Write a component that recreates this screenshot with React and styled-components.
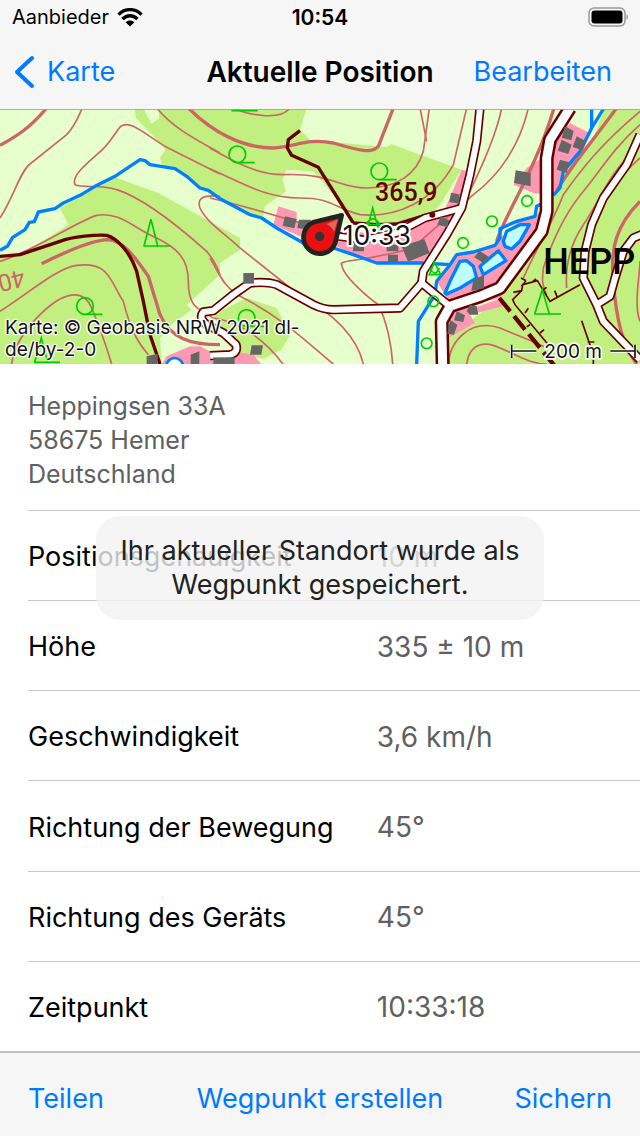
import React from "react";
import styled, { createGlobalStyle } from "styled-components";

const GlobalStyle = createGlobalStyle`
  *, *::before, *::after { box-sizing: border-box; }
  body { margin: 0; background: #fff; }
`;

const Screen = styled.div`
  display: flex;
  flex-direction: column;
  min-height: 100vh;
  font-family: Inter, "Liberation Sans", sans-serif;
  font-size: 27px;
  color: #000;
  background: #fff;
`;

const StatusBar = styled.div`
  display: grid;
  grid-template-columns: 1fr auto 1fr;
  align-items: center;
  height: 34px;
  padding: 0 12px;
  background: #f6f6f6;
  font-size: 20px;
`;

const Carrier = styled.div`
  display: flex;
  align-items: center;
  gap: 8px;
`;

const Clock = styled.time`
  font-size: 21px;
  font-weight: 600;
`;

const Battery = styled.svg`
  justify-self: end;
`;

const NavBar = styled.header`
  display: grid;
  grid-template-columns: 1fr auto 1fr;
  align-items: center;
  height: 75px;
  background: #f6f6f6;
`;

const Title = styled.h1`
  margin: 0;
  font-size: 28px;
  font-weight: 600;
`;

const TextButton = styled.button`
  display: flex;
  align-items: center;
  gap: 12px;
  justify-self: ${(p) => p.$side || "center"};
  padding: 0 ${(p) => p.$inset || "0"};
  border: 0;
  background: none;
  color: #007aff;
  font: inherit;
  white-space: nowrap;
  cursor: pointer;
`;

const MapView = styled.section`
  position: relative;
  height: 255px;
  overflow: hidden;
`;

const MapDrawing = styled.svg`
  display: block;
  width: 100%;
  height: 100%;
`;

const Attribution = styled.p`
  position: absolute;
  left: 5px;
  bottom: 3px;
  width: 310px;
  margin: 0;
  font-size: 19px;
  line-height: 22px;
  color: #111;
  text-shadow: 0 0 2px #fff, 1px 1px 1px #fff, -1px -1px 1px #fff, 1px -1px 1px #fff, -1px 1px 1px #fff;
`;

const Details = styled.main`
  position: relative;
  display: flex;
  flex: 1;
  flex-direction: column;
  padding-left: 28px;
`;

const Address = styled.address`
  padding: 25px 0 19px;
  font-size: 25px;
  font-style: normal;
  line-height: 34px;
  color: #606060;
`;

const Facts = styled.dl`
  display: grid;
  flex: 1;
  grid-auto-rows: minmax(90px, 1fr);
  margin: 0;
`;

const Fact = styled.div`
  display: grid;
  grid-template-columns: 57fr 43fr;
  align-items: center;
  padding-top: 2px;
  border-top: 1px solid #c8c8c8;
`;

const Name = styled.dt`
  white-space: nowrap;
`;

const Value = styled.dd`
  margin: 0;
  font-size: 28px;
  color: #606060;
`;

const Toast = styled.div`
  position: absolute;
  top: 152px;
  left: 15%;
  right: 15%;
  padding: 18px 0;
  border-radius: 24px;
  background: rgba(242, 242, 242, 0.8);
  color: #222;
  line-height: 34px;
  text-align: center;
`;

const ToolBar = styled.footer`
  display: grid;
  grid-template-columns: 1fr auto 1fr;
  align-items: center;
  height: 85px;
  padding: 8px 28px 0;
  border-top: 2px solid #c2c2c2;
  background: #f6f6f6;
`;

const FOREST = [
  "M403 0L408 30L470 95L497 125L480 150L490 180L530 185L600 240L650 265L750 320L788 330L794 295L858 250L848 215L858 185L940 190L1000 260L1065 345L1190 350L1290 325L1320 290L1385 185L1260 140L1175 108L1160 118L930 95L900 65L920 0H475L478 30L455 47L430 0Z",
  "M180 300L345 208L475 255L720 390L720 425L660 465L660 500L560 590L575 605L520 645L480 690L485 770H0V445L80 430L205 350Z",
  "M640 620L740 570L830 600L870 680L845 725L790 752L700 735Z",
  "M1815 0H1920V770H1345V690L1500 570L1630 370L1650 290L1690 200L1780 90Z",
];

const BUILT_UP = [
  "M1710 45L1768 75L1750 130L1690 200L1660 262L1600 255L1540 230L1580 180L1625 150L1660 100Z",
  "M1500 390L1550 345L1610 320L1640 290L1640 370L1500 570L1360 600L1310 520L1355 465L1375 440L1485 412Z",
  "M1000 410V375L1060 370L1200 390L1270 330L1330 315L1385 185L1410 190L1370 330L1300 430L1260 468L1150 465L1060 440Z",
  "M835 295L890 312V340L940 335V402L820 350Z",
  "M1360 600L1420 600L1500 572L1508 595L1410 620L1425 645L1345 690Z",
  "M485 770L500 745L570 715H600L650 740L700 730L760 740L785 770Z",
];

const CONTOURS = [
  "M0 330C40 270 60 190 90 168L200 80C225 55 235 25 247 0",
  "M470 0C520 60 580 90 660 135",
  "M660 198L500 118C430 75 390 35 362 55C340 80 330 110 290 140C250 175 215 205 225 230C250 240 310 230 350 245C430 270 530 350 620 430C645 460 655 485 660 500",
  "M0 460C100 430 230 340 290 322C360 310 400 360 470 390C530 420 565 450 565 520C565 590 585 600 640 630C720 640 800 700 850 770",
  "M0 610C80 560 170 480 230 472C330 460 330 520 370 580C395 680 420 710 445 740",
  "M35 768C40 720 70 670 120 620C190 550 250 540 275 600C305 670 320 720 335 768",
  "M660 265C610 260 590 270 600 300C620 345 680 380 720 420L890 555C990 610 1070 680 1090 768",
  "M630 120C700 160 770 200 850 200C1000 195 1010 240 1100 240C1190 240 1250 200 1270 130L1288 0",
  "M630 183C720 220 790 270 900 270C1000 270 1000 300 1080 320C1190 330 1300 280 1360 170L1400 0",
  "M630 450C660 500 670 540 730 570C850 630 940 720 1000 768M630 270C760 300 880 340 920 350",
  "M1270 410C1120 460 1010 455 1025 470C1030 510 1120 580 1135 590C1160 640 1175 710 1178 768",
  "M1280 100L1260 0M1505 0C1490 80 1440 190 1390 290M1585 0C1560 110 1500 200 1420 260L1260 400",
  "M1920 10C1800 110 1740 190 1690 260C1660 340 1610 420 1570 510",
  "M1920 50C1840 120 1800 190 1750 250C1700 310 1660 390 1630 480C1630 500 1620 520 1640 560",
  "M1920 110C1820 200 1800 280 1750 350C1710 410 1695 470 1700 540",
  "M1920 150C1840 220 1800 300 1760 380L1750 480",
  "M1345 768C1350 700 1410 630 1500 660C1570 690 1600 700 1640 720M1400 768C1410 700 1460 700 1500 720C1550 740 1590 768 1640 768",
  "M1920 640C1900 590 1920 500 1920 460M700 0C740 20 840 40 870 0",
];

const BOLD_CONTOURS = [
  "M0 112C50 85 90 60 140 0M565 0C640 75 730 120 820 120C890 115 920 90 1000 105C1070 125 1115 140 1135 115L1180 0",
  "M125 467C230 415 290 395 325 395C370 400 400 440 445 505L480 620C510 690 570 710 660 710",
  "M1662 0C1610 180 1510 330 1490 400M1850 0C1770 110 1700 190 1670 250",
  "M1920 280C1850 350 1830 420 1840 520C1850 650 1870 710 1910 768",
];

const STREAMS = [
  "M0 427L22 415L38 388L75 365L88 343L103 341L115 312L165 302L190 285L240 262L285 235L345 205L420 155L435 158L450 170L525 182L560 205L600 240L625 247L660 272L690 288L750 320L785 330L830 360L910 405L1000 420L1060 440L1130 465H1265L1350 470L1370 440L1420 432L1485 412L1500 390V362L1550 340L1605 325L1610 295L1630 285M1660 262L1680 240L1690 190L1740 130L1760 90L1775 60L1812 0M1775 0V60",
  "M1350 470L1310 520L1305 560L1255 640L1250 768",
];

const PONDS = [
  "M1335 555L1350 520L1380 460L1400 458L1420 475L1430 510L1380 540L1340 558Z",
  "M1440 475L1495 428L1518 458L1450 500Z",
  "M1510 400L1520 370L1560 350L1588 350L1560 400L1535 423L1515 415Z",
];

const ROADS = [
  { d: "M1710 0L1650 95L1640 150V310L1625 370L1500 540L1440 565L1350 595L1325 640L1328 770", w: 42 },
  { d: "M1440 0L1430 100L1410 200L1385 300L1340 380L1270 490L1265 525L1350 595", w: 28 },
  { d: "M1265 525L1200 600L1000 605Q970 605 940 590L830 530Q800 520 750 525L700 560L640 608L610 612Q595 630 620 650L670 675L708 710Q715 735 690 740L630 743", w: 28 },
  { d: "M1920 80L1880 170L1810 270L1775 350L1755 430L1750 510L1790 590L1810 640L1920 755", w: 28 },
  { d: "M1790 590L1830 565L1845 510L1870 430L1900 390L1925 380", w: 28 },
  { d: "M1000 383L1090 395L1190 375L1275 330L1385 300", w: 26 },
];

const BUILDINGS = [
  "M855 325l35 8l-7 28l-35-8z",
  "M897 335h35v30l-40-5z",
  "M730 495h32v32h-32z",
  "M440 745l33-8v31h-33zM572 740l26-10v38h-26z",
  "M755 712h34l-5 28h-34z",
  "M640 748h64v20h-64z",
  "M1064 400h28v30h-34z",
  "M1160 410h35v20h-35zM1164 440h30v22h-30z",
  "M1205 415l68-22l16 42l-65 26z",
  "M1353 254l25 5v28l-30-5z",
  "M1322 325l25 12l-5 20l-30-7z",
  "M1547 187l45 8v40l-50-10z",
  "M1695 55l26 14l-7 28l-29-8z",
  "M1685 95l30 15l-10 28l-32-10z",
  "M1730 85l28 15l-10 27l-30-10z",
  "M1680 155l28 8l-8 32l-30-10z",
  "M1438 428l28 18l-15 20l-28-18z",
  "M1420 515l32-14v40l-38 8z",
  "M1410 590l20 5l5 25h-25l-10-10zM1370 610l25 12l-5 20l-28-5zM1350 635l22 15l-10 30l-20-3z",
];

const DECIDUOUS = [
  [255, 594, 25],
  [712, 139, 25],
  [1138, 190, 25],
  [740, 630, 25],
];

const ORCHARD = [
  [1581, 279],
  [1476, 340],
  [1389, 405],
  [1280, 706],
  [1300, 580],
];

const CONIFERS = [
  "M432 414L453 334L473 414M430 414H510",
  "M104 763L124 690L143 763M102 763H180",
  "M1604 618L1627 545L1648 618M1602 618H1683",
  "M1100 370L1118 300L1137 370M1098 350q20-35 42 0M1098 350H1145",
  "M1288 500L1303 462L1322 500ZM1290 480q15 30 28 0",
  "M694 8H773",
];

const FACTS = [
  ["Positionsgenauigkeit", "10 m"],
  ["Höhe", "335 ± 10 m"],
  ["Geschwindigkeit", "3,6 km/h"],
  ["Richtung der Bewegung", "45°"],
  ["Richtung des Geräts", "45°"],
  ["Zeitpunkt", "10:33:18"],
];

function TopoMap() {
  return (
    <MapDrawing viewBox="0 3 1920 765" preserveAspectRatio="xMidYMid slice" role="img" aria-label="Topografische Karte">
      <rect width="1920" height="770" fill="#e6ffcc" />
      <g fill="#c1f080">{FOREST.map((d) => <path key={d} d={d} />)}</g>
      <g fill="#ff99b3">{BUILT_UP.map((d) => <path key={d} d={d} />)}</g>
      <g fill="none" stroke="#cc6666" strokeWidth="5">{CONTOURS.map((d) => <path key={d} d={d} />)}</g>
      <g fill="none" stroke="#cc6666" strokeWidth="10">{BOLD_CONTOURS.map((d) => <path key={d} d={d} />)}</g>
      <g fill="none" stroke="#0080ff" strokeWidth="10" strokeLinejoin="round">
        {STREAMS.map((d) => <path key={d} d={d} />)}
      </g>
      <g fill="#bfffff" stroke="#0080ff" strokeWidth="10" strokeLinejoin="round">
        {PONDS.map((d) => <path key={d} d={d} />)}
      </g>
      <g fill="none" stroke="#660000" strokeWidth="10" strokeLinejoin="round">
        <path d="M0 445L60 440L180 400C220 385 290 380 320 382C350 390 390 430 410 490L430 580L450 680L480 768" />
        <path d="M900 68L865 95L862 120L875 142L955 178L1060 345L1130 350L1190 348L1275 322" />
        <path d="M1498 570L1665 775" strokeWidth="13" strokeDasharray="52 18" />
      </g>
      <g fill="none" stroke="#660000" strokeWidth="5">
        <path d="M1578 518L1568 530L1612 518L1650 580L1740 530M1568 530L1565 548L1538 575L1545 590L1645 710M1565 548l-25 5M1578 518l-15-8M1612 518l-14 3l10-8M1628 546l12-8M1672 568l-8-20M1575 615l10-14M1590 650l-10 6M1620 675l12-10M1745 638L1780 740V768M1763 702h20" />
      </g>
      <g fill="none" stroke="#660000" strokeLinejoin="round">
        {ROADS.map((r) => <path key={r.d} d={r.d} strokeWidth={r.w} />)}
      </g>
      <g fill="none" stroke="#fff" strokeLinejoin="round">
        {ROADS.map((r) => <path key={r.d} d={r.d} strokeWidth={r.w * 0.64} />)}
      </g>
      <circle cx="1297" cy="320" r="9" fill="#660000" />
      <g fill="#666">{BUILDINGS.map((d) => <path key={d} d={d} />)}</g>
      <g fill="none" stroke="#00cc00" strokeWidth="5">
        {DECIDUOUS.map(([x, y, r]) => (
          <path key={x} d={`M${x - r} ${y}a${r} ${r} 0 1 0 ${r * 2} 0a${r} ${r} 0 1 0 ${-r * 2} 0M${x} ${y + r}h52`} />
        ))}
        {ORCHARD.map(([x, y]) => <circle key={x} cx={x} cy={y} r="16" />)}
        {CONIFERS.map((d) => <path key={d} d={d} />)}
      </g>
      <circle cx="524" cy="775" r="25" fill="#fff" stroke="#0080ff" strokeWidth="8" />

      <g fontFamily="Roboto, sans-serif">
        <text x="1125" y="280" fontSize="75" fontWeight="500" fill="#660000">365,9</text>
        <text x="1630" y="498" fontSize="108" fontWeight="500" fill="#000">HEPP</text>
        <text transform="translate(68 484) rotate(166)" fontSize="72" fill="#cc6666">400</text>
      </g>

      <path
        d="M1025 322L940 343A49 49 0 1 0 1006 404Z"
        fill="#e81010"
        stroke="#222"
        strokeWidth="14"
        strokeLinejoin="round"
      />
      <path d="M1014 334L979 348Q997 357 1002 371Z" fill="#d96a5e" />
      <circle cx="959" cy="385" r="14" fill="#333" />

      <g fontFamily="Inter, sans-serif" fill="#111" stroke="#fff" strokeLinejoin="round" paintOrder="stroke">
        <text x="1028" y="411" fontSize="80" strokeWidth="12">10:33</text>
        <text x="1633" y="750" fontSize="57" strokeWidth="10">200 m</text>
      </g>
      <g fill="none">
        <path d="M1535 712V748M1535 729H1609M1831 729H1905M1905 712V748" stroke="#fff" strokeWidth="10" />
        <path d="M1535 710V750M1535 729H1609M1831 729H1905M1905 710V750" stroke="#111" strokeWidth="5" />
      </g>
      <path d="M0 4H1920" stroke="#9aa68c" strokeWidth="3" />
    </MapDrawing>
  );
}

export default function App() {
  return (
    <Screen>
      <GlobalStyle />
      <StatusBar>
        <Carrier>
          Aanbieder
          <svg width="26" height="19" viewBox="0 0 26 19" fill="none" stroke="#000" strokeWidth="3.4" aria-hidden="true">
            <path d="M1.500 6.600C8 0 18 0 24.500 6.600M5.500 11C10 6.600 16 6.600 20.500 11" />
            <path d="M13 18.500L8.600 14.200C11.200 12 14.800 12 17.400 14.200Z" fill="#000" stroke="none" />
          </svg>
        </Carrier>
        <Clock>10:54</Clock>
        <Battery width="40" height="20" viewBox="0 0 40 20" aria-hidden="true">
          <rect x="1" y="1" width="36" height="18" rx="5" fill="none" stroke="#999" strokeWidth="1.500" />
          <rect x="3.500" y="3.500" width="31" height="13" rx="3" fill="#000" />
          <path d="M38.500 7Q40 8 40 10T38.500 13Z" fill="#999" />
        </Battery>
      </StatusBar>
      <NavBar>
        <TextButton type="button" $side="start" $inset="14px">
          <svg width="21" height="34" viewBox="0 0 21 34" fill="none" stroke="#007aff" strokeWidth="4" strokeLinecap="round" strokeLinejoin="round" aria-hidden="true">
            <path d="M18 3L3 17L18 31" />
          </svg>
          Karte
        </TextButton>
        <Title>Aktuelle Position</Title>
        <TextButton type="button" $side="end" $inset="28px">Bearbeiten</TextButton>
      </NavBar>
      <MapView>
        <TopoMap />
        <Attribution>Karte: © Geobasis NRW 2021 dl-de/by-2-0</Attribution>
      </MapView>
      <Details>
        <Address>
          Heppingsen 33A
          <br />
          58675 Hemer
          <br />
          Deutschland
        </Address>
        <Facts>
          {FACTS.map(([name, value]) => (
            <Fact key={name}>
              <Name>{name}</Name>
              <Value>{value}</Value>
            </Fact>
          ))}
        </Facts>
        <Toast role="status">
          Ihr aktueller Standort wurde als
          <br />
          Wegpunkt gespeichert.
        </Toast>
      </Details>
      <ToolBar>
        <TextButton type="button" $side="start">Teilen</TextButton>
        <TextButton type="button">Wegpunkt erstellen</TextButton>
        <TextButton type="button" $side="end">Sichern</TextButton>
      </ToolBar>
    </Screen>
  );
}
